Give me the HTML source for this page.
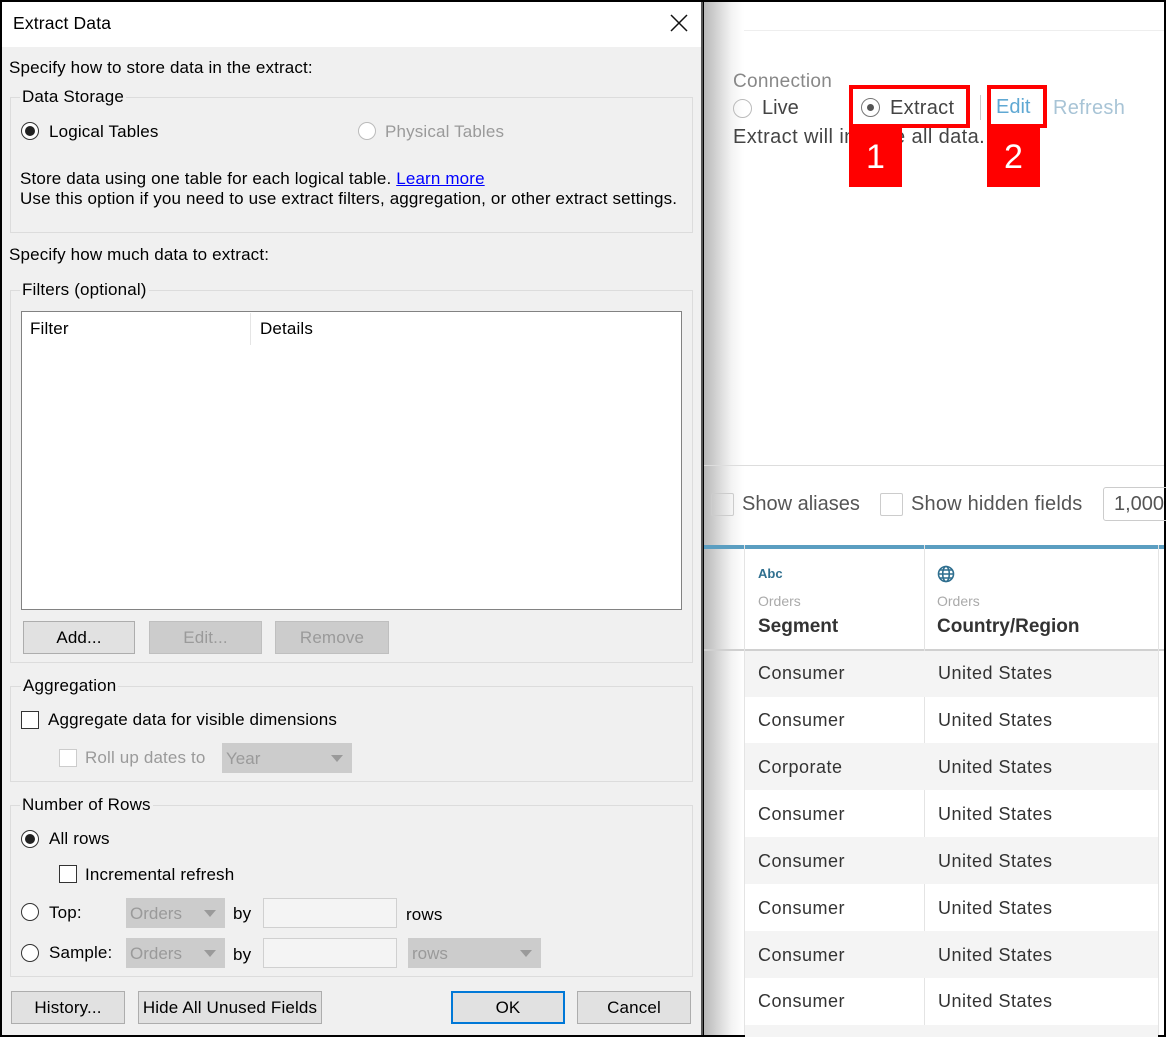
<!DOCTYPE html>
<html><head><meta charset="utf-8"><style>
*{box-sizing:border-box;margin:0;padding:0}
body{width:1166px;height:1037px;position:relative;overflow:hidden;background:#000;font-family:"Liberation Sans",sans-serif}
.a{position:absolute;white-space:nowrap}
.d{font-size:17px;color:#000;letter-spacing:0.15px;line-height:20px}
.g{color:#9a9a9a}
.box{position:absolute;border:1px solid #dcdcdc}
.lg{position:absolute;background:#f0f0f0;padding:0 2px;font-size:17px;letter-spacing:0.15px;line-height:20px}
.rad{position:absolute;width:18px;height:18px;border:1px solid #333;border-radius:50%;background:#fff}
.rad.on::after{content:"";position:absolute;left:3px;top:3px;width:10px;height:10px;border-radius:50%;background:#222}
.chk{position:absolute;width:18px;height:18px;border:1px solid #333;background:#fff}
.btn{position:absolute;height:33px;border:1px solid #adadad;background:#e1e1e1;font-size:17px;text-align:center;line-height:31px;letter-spacing:0.15px}
.dis{color:#9a9a9a;background:#cccccc;border-color:#bfbfbf}
.sel{position:absolute;height:30px;background:#cccccc;color:#9a9a9a;font-size:17px;line-height:32px;padding-left:4px}
.sel::after{content:"";position:absolute;right:9px;top:12px;border-left:6px solid transparent;border-right:6px solid transparent;border-top:7px solid #9a9a9a}
.inp{position:absolute;height:30px;background:#f4f4f4;border:1px solid #d0d0d0}
.r{font-size:18px;color:#333;letter-spacing:0.5px}
</style></head><body>
<!-- right panel -->
<div class="a" style="left:704px;top:2px;width:460px;height:1033px;background:#fff"></div>
<div class="a" style="left:704px;top:30px;width:460px;height:1px;background:#eee"></div>
<div class="a" style="left:704px;top:2px;width:40px;height:1033px;background:linear-gradient(to right,#b8b8b8,#f4f4f4 70%,#fff)"></div>
<div class="a" style="left:733px;top:71px;font-size:19px;color:#888;letter-spacing:0.3px">Connection</div>
<div class="a" style="left:733px;top:99px;width:19px;height:19px;border:1px solid #bbb;border-radius:50%"></div>
<div class="a" style="left:762px;top:97px;font-size:20px;color:#444">Live</div>
<div class="a" style="left:733px;top:126px;font-size:20px;color:#444;letter-spacing:0.4px">Extract will include all data.</div>
<div class="a" style="left:980px;top:95px;width:1px;height:25px;background:#ccc"></div>
<div class="a" style="left:1053px;top:97px;font-size:20px;color:#a8c4d6;letter-spacing:0.3px">Refresh</div>
<div class="a" style="left:849px;top:85px;width:121px;height:43px;border:4px solid #f00;background:#fff"></div>
<div class="a" style="left:861px;top:98px;width:19px;height:19px;border:1px solid #777;border-radius:50%"><div style="position:absolute;left:5px;top:5px;width:7px;height:7px;border-radius:50%;background:#555"></div></div>
<div class="a" style="left:890px;top:97px;font-size:20px;color:#444;letter-spacing:0.3px">Extract</div>
<div class="a" style="left:849px;top:128px;width:53px;height:59px;background:#f00;color:#fff;font-size:34px;text-align:center;line-height:59px">1</div>
<div class="a" style="left:987px;top:85px;width:60px;height:43px;border:4px solid #f00;background:#fff"></div>
<div class="a" style="left:996px;top:96px;font-size:20px;color:#5fa8d3">Edit</div>
<div class="a" style="left:987px;top:128px;width:53px;height:59px;background:#f00;color:#fff;font-size:34px;text-align:center;line-height:59px">2</div>
<div class="a" style="left:704px;top:465px;width:460px;height:1px;background:#ddd"></div>
<div class="a" style="left:711px;top:493px;width:23px;height:23px;border:1px solid #ccc;border-radius:2px"></div>
<div class="a" style="left:742px;top:493px;font-size:20px;color:#555">Show aliases</div>
<div class="a" style="left:880px;top:493px;width:23px;height:23px;border:1px solid #ccc;border-radius:2px"></div>
<div class="a" style="left:911px;top:493px;font-size:20px;color:#555;letter-spacing:0.2px">Show hidden fields</div>
<div class="a" style="left:1103px;top:487px;width:70px;height:34px;border:1px solid #ccc;border-radius:3px;font-size:20px;color:#555;padding:5px 0 0 10px">1,000</div>
<div class="a" style="left:704px;top:545px;width:460px;height:4px;background:#5b9ec1"></div>
<div class="a" style="left:704px;top:649px;width:460px;height:2px;background:#d0d0d0"></div>
<div class="a" style="left:744px;top:545px;width:1px;height:490px;background:#e4e4e4"></div>
<div class="a" style="left:924px;top:545px;width:1px;height:490px;background:#e4e4e4"></div>
<div class="a" style="left:1158px;top:545px;width:1px;height:490px;background:#e4e4e4"></div>
<div class="a" style="left:758px;top:566px;font-size:13px;font-weight:bold;color:#2f6f8f">Abc</div>
<svg class="a" style="left:937px;top:565px" width="18" height="18" viewBox="0 0 18 18" fill="none" stroke="#2f6f8f" stroke-width="1.6"><circle cx="9" cy="9" r="7.5"/><ellipse cx="9" cy="9" rx="3.3" ry="7.5"/><path d="M1.5 9h15M3 5h12M3 13h12"/></svg>
<div class="a" style="left:758px;top:593px;font-size:14px;color:#aaa">Orders</div>
<div class="a" style="left:937px;top:593px;font-size:14px;color:#aaa">Orders</div>
<div class="a" style="left:758px;top:616px;font-size:19px;font-weight:bold;color:#333">Segment</div>
<div class="a" style="left:937px;top:616px;font-size:19px;font-weight:bold;color:#333">Country/Region</div>
<div class="a" style="left:745px;top:651px;width:413px;height:46px;background:#f4f4f4"></div>
<div class="a" style="left:745px;top:743px;width:413px;height:47px;background:#f4f4f4"></div>
<div class="a" style="left:745px;top:837px;width:413px;height:47px;background:#f4f4f4"></div>
<div class="a" style="left:745px;top:931px;width:413px;height:47px;background:#f4f4f4"></div>
<div class="a" style="left:745px;top:1025px;width:413px;height:12px;background:#f4f4f4"></div>
<div class="a r" style="left:758px;top:663px">Consumer</div><div class="a r" style="left:938px;top:663px">United States</div>
<div class="a r" style="left:758px;top:710px">Consumer</div><div class="a r" style="left:938px;top:710px">United States</div>
<div class="a r" style="left:758px;top:757px">Corporate</div><div class="a r" style="left:938px;top:757px">United States</div>
<div class="a r" style="left:758px;top:804px">Consumer</div><div class="a r" style="left:938px;top:804px">United States</div>
<div class="a r" style="left:758px;top:851px">Consumer</div><div class="a r" style="left:938px;top:851px">United States</div>
<div class="a r" style="left:758px;top:898px">Consumer</div><div class="a r" style="left:938px;top:898px">United States</div>
<div class="a r" style="left:758px;top:945px">Consumer</div><div class="a r" style="left:938px;top:945px">United States</div>
<div class="a r" style="left:758px;top:991px">Consumer</div><div class="a r" style="left:938px;top:991px">United States</div>

<!-- dialog -->
<div class="a" style="left:2px;top:2px;width:701px;height:1033px;background:#f0f0f0;border-right:2px solid #555"></div>
<div class="a" style="left:2px;top:2px;width:699px;height:45px;background:#fff"></div>
<div class="a d" style="left:13px;top:13px;font-size:17.5px">Extract Data</div>
<svg class="a" style="left:670px;top:14px" width="18" height="18" viewBox="0 0 18 18" stroke="#111" stroke-width="1.5"><path d="M1 1L17 17M17 1L1 17"/></svg>
<div class="a d" style="left:9px;top:58px">Specify how to store data in the extract:</div>
<div class="box" style="left:10px;top:97px;width:683px;height:136px"></div>
<div class="lg" style="left:20px;top:87px">Data Storage</div>
<div class="rad on" style="left:21px;top:122px"></div>
<div class="a d" style="left:49px;top:122px">Logical Tables</div>
<div class="rad" style="left:358px;top:122px;border-color:#bbb"></div>
<div class="a d g" style="left:385px;top:122px">Physical Tables</div>
<div class="a d" style="left:20px;top:169px">Store data using one table for each logical table. <span style="color:#00f;text-decoration:underline">Learn more</span></div>
<div class="a d" style="left:20px;top:189px">Use this option if you need to use extract filters, aggregation, or other extract settings.</div>
<div class="a d" style="left:9px;top:245px">Specify how much data to extract:</div>
<div class="box" style="left:10px;top:290px;width:683px;height:373px"></div>
<div class="lg" style="left:20px;top:280px">Filters (optional)</div>
<div class="a" style="left:21px;top:311px;width:661px;height:299px;background:#fff;border:1px solid #828282"></div>
<div class="a" style="left:250px;top:313px;width:1px;height:32px;background:#e5e5e5"></div>
<div class="a d" style="left:30px;top:319px">Filter</div>
<div class="a d" style="left:260px;top:319px">Details</div>
<div class="btn" style="left:23px;top:621px;width:112px">Add...</div>
<div class="btn dis" style="left:149px;top:621px;width:113px">Edit...</div>
<div class="btn dis" style="left:275px;top:621px;width:114px">Remove</div>
<div class="box" style="left:10px;top:686px;width:683px;height:96px"></div>
<div class="lg" style="left:21px;top:676px">Aggregation</div>
<div class="chk" style="left:21px;top:711px"></div>
<div class="a d" style="left:48px;top:710px">Aggregate data for visible dimensions</div>
<div class="chk" style="left:59px;top:749px;border-color:#ccc"></div>
<div class="a d g" style="left:85px;top:748px">Roll up dates to</div>
<div class="sel" style="left:222px;top:743px;width:130px">Year</div>
<div class="box" style="left:10px;top:805px;width:683px;height:172px"></div>
<div class="lg" style="left:20px;top:795px">Number of Rows</div>
<div class="rad on" style="left:21px;top:830px"></div>
<div class="a d" style="left:49px;top:829px">All rows</div>
<div class="chk" style="left:59px;top:865px"></div>
<div class="a d" style="left:85px;top:865px">Incremental refresh</div>
<div class="rad" style="left:21px;top:903px"></div>
<div class="a d" style="left:49px;top:903px">Top:</div>
<div class="sel" style="left:126px;top:898px;width:99px">Orders</div>
<div class="a d" style="left:233px;top:904px">by</div>
<div class="inp" style="left:263px;top:898px;width:134px"></div>
<div class="a d" style="left:406px;top:905px">rows</div>
<div class="rad" style="left:21px;top:944px"></div>
<div class="a d" style="left:49px;top:943px">Sample:</div>
<div class="sel" style="left:126px;top:938px;width:99px">Orders</div>
<div class="a d" style="left:233px;top:945px">by</div>
<div class="inp" style="left:263px;top:938px;width:134px"></div>
<div class="sel" style="left:408px;top:938px;width:133px">rows</div>
<div class="btn" style="left:11px;top:991px;width:114px">History...</div>
<div class="btn" style="left:138px;top:991px;width:184px">Hide All Unused Fields</div>
<div class="btn" style="left:451px;top:991px;width:114px;border:2px solid #0078d7;line-height:29px">OK</div>
<div class="btn" style="left:577px;top:991px;width:114px">Cancel</div>
</body></html>
